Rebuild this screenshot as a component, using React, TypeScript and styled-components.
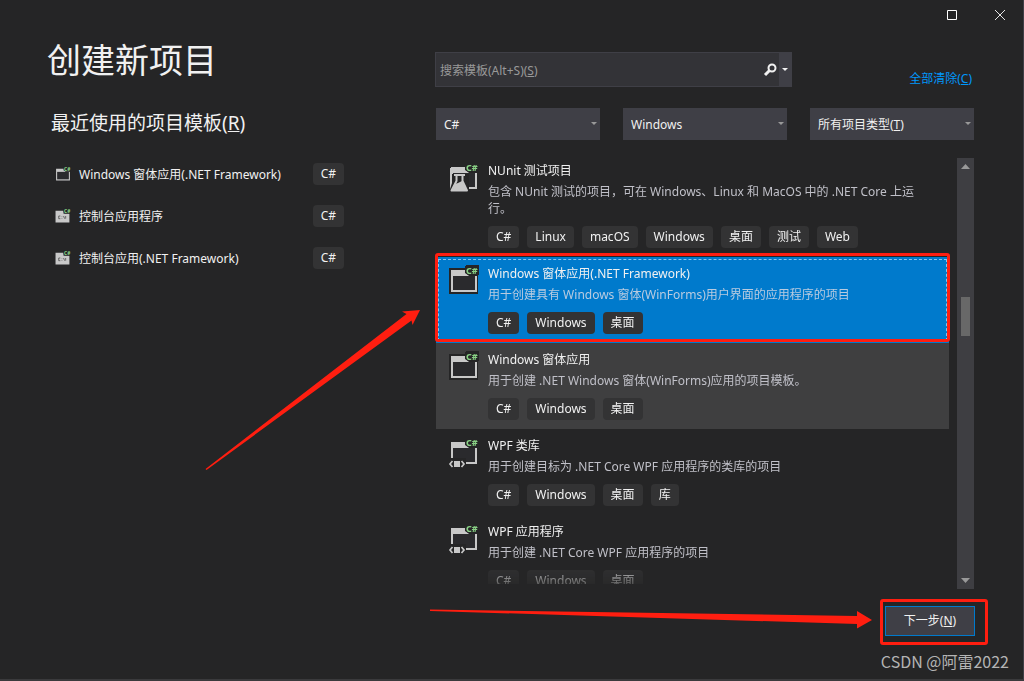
import React from "react";
import styled, { createGlobalStyle, css } from "styled-components";

const GlobalStyle = createGlobalStyle`
  * { box-sizing: border-box; }
  body {
    margin: 0;
    background: #252526;
    color: #f1f1f1;
    font-family: "Noto Sans", "Noto Sans CJK SC", sans-serif;
    font-size: 12px;
  }
  button, input, select { font: inherit; color: inherit; }
  h1, h2, h3, p, ul { margin: 0; padding: 0; font-weight: 400; }
  ul { list-style: none; }
`;

const Window = styled.div`
  position: relative;
  display: flex;
  flex-direction: column;
  height: 100vh;
  min-height: 480px;
  background: #252526;
  border-right: 1px solid #3f3f46;
  border-bottom: 2px solid #3a3a3c;
`;

const TitleBar = styled.header`
  display: flex;
  justify-content: flex-end;
  height: 30px;
  margin-right: -1px;
`;

const CaptionButton = styled.button`
  display: grid;
  place-items: center;
  width: 48px;
  padding: 0;
  border: 0;
  background: none;
`;

const Main = styled.main`
  flex: 1;
  min-height: 0;
  display: grid;
  grid-template-columns: minmax(0, 388fr) minmax(0, 539fr);
  padding: 0 49px 0 47px;
`;

const RecentPane = styled.section`
  padding-top: 6px;
`;

const Title = styled.h1`
  font-size: 34px;
  line-height: 48px;
  white-space: nowrap;
`;

const Subtitle = styled.h2`
  margin-top: 25px;
  padding-left: 4px;
  font-size: 19px;
  line-height: 28px;
  white-space: nowrap;
`;

const RecentList = styled.ul`
  max-width: 297px;
  margin-top: 16px;
  padding-left: 8px;
`;

const RecentItem = styled.li`
  display: flex;
  align-items: center;
  gap: 8px;
  height: 42px;
`;

const RecentName = styled.span`
  flex: 1;
  white-space: nowrap;
`;

const Tag = styled.span`
  display: inline-block;
  padding: 0 8px;
  border-radius: 4px;
  background: #333334;
  line-height: 22px;
  white-space: nowrap;
`;

const TemplatePane = styled.section`
  display: flex;
  flex-direction: column;
  min-height: 0;
  padding-top: 22px;
`;

const SearchRow = styled.div`
  display: flex;
  align-items: flex-end;
  justify-content: space-between;
  padding-right: 2px;
`;

const SearchBox = styled.div`
  display: grid;
  grid-template-columns: 1fr 23px 12px;
  width: 357px;
  height: 35px;
  border: 1px solid #3f3f46;
  background: #333337;
`;

const SearchLabel = styled.label`
  grid-area: 1 / 1;
  align-self: center;
  padding-left: 4px;
  color: #999999;
`;

const SearchInput = styled.input`
  grid-area: 1 / 1;
  min-width: 0;
  padding: 0 4px;
  border: 0;
  outline: 0;
  background: transparent;
`;

const SearchButton = styled.button<{ $filled?: boolean }>`
  display: grid;
  align-items: center;
  justify-items: ${(p) => (p.$filled ? "center" : "end")};
  padding: 0;
  border: 0;
  background: ${(p) => (p.$filled ? "#3f3f46" : "none")};
`;

const ClearLink = styled.a`
  color: #0097fb;
  line-height: 16px;
  text-decoration: none;
`;

const Filters = styled.div`
  display: grid;
  grid-template-columns: repeat(3, minmax(0, 1fr));
  gap: 23px;
  margin-top: 21px;
  padding-left: 1px;
`;

const Filter = styled.div`
  display: grid;
  grid-template-columns: 1fr 12px;
  align-items: center;
  height: 32px;
  background: #3f3f46;
`;

const FilterSelect = styled.select`
  grid-area: 1 / 1 / 2 / 3;
  height: 32px;
  padding: 0 8px;
  border: 0;
  outline: 0;
  appearance: none;
  background: transparent;
`;

const FilterLabel = styled.label`
  grid-area: 1 / 1;
  padding-left: 8px;
  pointer-events: none;
`;

const FilterArrow = styled.svg`
  grid-area: 1 / 2;
  justify-self: center;
  pointer-events: none;
`;

const ListArea = styled.div`
  flex: 1;
  min-height: 0;
  display: flex;
  gap: 8px;
  margin-top: 14px;
  padding-left: 1px;
`;

const TemplateList = styled.ul`
  flex: 1;
  min-width: 0;
  margin: 0 -1px 5px;
  padding: 0 1px;
  overflow: hidden;
  mask-image: linear-gradient(to top, rgba(0, 0, 0, 0.3), #000 24px);
`;

type RowState = "selected" | "hover" | undefined;

const TemplateRow = styled.li<{ $state: RowState }>`
  position: relative;
  display: flex;
  gap: 9px;
  padding: 7px 13px 9px;
  ${(p) =>
    p.$state === "selected" &&
    css`
      background: #007acc;
      outline: 1px dashed #8cc4ec;
      outline-offset: -3px;
    `}
  ${(p) => p.$state === "hover" && css`background: #3f3f40;`}
`;

const IconSlot = styled.div`
  flex: none;
  padding-top: 1px;
`;

const Glyph = styled.svg`
  overflow: visible;
`;

const TemplateText = styled.div`
  min-width: 0;
`;

const TemplateName = styled.h3`
  font-size: 12px;
  line-height: 20px;
`;

const TemplateInfo = styled.p<{ $selected: boolean }>`
  margin-top: 2px;
  line-height: 17px;
  color: ${(p) => (p.$selected ? "#b9cbe0" : "#c0c0c8")};
`;

const Tags = styled.div`
  display: flex;
  gap: 8px;
  margin-top: 9px;
`;

const ScrollBar = styled.div`
  display: flex;
  flex-direction: column;
  align-items: center;
  justify-content: space-between;
  width: 17px;
  margin-top: 4px;
  padding: 5px 0;
  background: #3e3e42;
`;

const Track = styled.div`
  flex: 1;
  display: grid;
  grid-template-rows: 126fr 39px 239fr;
  width: 9px;
`;

const Thumb = styled.div`
  grid-row: 2;
  background: #686868;
`;

const Footer = styled.footer`
  display: flex;
  flex-direction: column;
  align-items: flex-end;
  padding: 17px 14px 8px;
`;

const NextSlot = styled.div`
  position: relative;
  margin-right: 34px;
`;

const NextButton = styled.button`
  width: 90px;
  height: 30px;
  padding: 0 0 2px;
  border: 1px solid #007acc;
  background: #3f3f46;
`;

const Credit = styled.p`
  margin-top: 15px;
  color: #b4b4b4;
  font-family: "Noto Sans CJK SC", sans-serif;
  font-size: 16px;
  line-height: 20px;
`;

const Highlight = styled.span<{ $inset: string }>`
  position: absolute;
  inset: ${(p) => p.$inset};
  z-index: 1;
  border: 3px solid #ff1e10;
  border-radius: 3px;
  pointer-events: none;
`;

const Arrows = styled.svg`
  position: absolute;
  top: 0;
  left: 0;
  pointer-events: none;
`;

type IconKind = "form" | "test" | "wpf" | "console";

function ProjectIcon({ kind, size }: { kind: IconKind; size: number }) {
  return (
    <Glyph width={size} height={size} viewBox="0 0 30 30" aria-hidden="true">
      {kind === "form" && <path d="M0 3h17V0h13v10h-1v19H0z" fill="#252526" />}
      {kind === "console" ? (
        <>
          <path d="M1 5h15v6h11v16H1z" fill="#c8c8c8" />
          <path d="M10 15H7v5h3M13 16v1M13 19v1M16 15l2 5M20 15v5" stroke="#444" strokeWidth="1.4" fill="none" />
        </>
      ) : (
        <>
          <path d="M2 5h15v3l3 3h8v16H2z" fill="#c8c8c8" />
          <path d="M4 11h22v14H4z" fill="#2a2a2d" />
        </>
      )}
      {kind === "test" && (
        <>
          <path d="M0 12h20v18H0z" fill="#252526" />
          <path d="M1 6h16v5H3v10l-2 6z" fill="#c8c8c8" />
          <path d="M5 13h11M7.500 13v6L2.500 28.500h15.500L13.500 19v-6" stroke="#c8c8c8" strokeWidth="2" fill="none" strokeLinejoin="round" />
          <path d="M6 22l3-1 4-2 5 10H3z" fill="#c8c8c8" />
        </>
      )}
      {kind === "wpf" && (
        <>
          <path d="M0 21h17v9H0z" fill="#252526" />
          <path d="M5 24h6v6H5z" fill="#c8c8c8" />
          <path d="M3.500 24L1 27l2.500 3M12.500 24l2.500 3-2.500 3" stroke="#c8c8c8" strokeWidth="1.700" fill="none" />
        </>
      )}
      <path d="M16 1h14v9H19l-3-2z" fill="#252526" />
      <text x="17" y="9" fontSize="9" fontWeight="800" fill="#89d185">C#</text>
    </Glyph>
  );
}

const recent: { icon: IconKind; name: string }[] = [
  { icon: "form", name: "Windows 窗体应用(.NET Framework)" },
  { icon: "console", name: "控制台应用程序" },
  { icon: "console", name: "控制台应用(.NET Framework)" },
];

const templates: { icon: IconKind; name: string; info: string; tags: string[]; state?: RowState }[] = [
  {
    icon: "test",
    name: "NUnit 测试项目",
    info: "包含 NUnit 测试的项目，可在 Windows、Linux 和 MacOS 中的 .NET Core 上运行。",
    tags: ["C#", "Linux", "macOS", "Windows", "桌面", "测试", "Web"],
  },
  {
    icon: "form",
    name: "Windows 窗体应用(.NET Framework)",
    info: "用于创建具有 Windows 窗体(WinForms)用户界面的应用程序的项目",
    tags: ["C#", "Windows", "桌面"],
    state: "selected",
  },
  {
    icon: "form",
    name: "Windows 窗体应用",
    info: "用于创建 .NET Windows 窗体(WinForms)应用的项目模板。",
    tags: ["C#", "Windows", "桌面"],
    state: "hover",
  },
  {
    icon: "wpf",
    name: "WPF 类库",
    info: "用于创建目标为 .NET Core WPF 应用程序的类库的项目",
    tags: ["C#", "Windows", "桌面", "库"],
  },
  {
    icon: "wpf",
    name: "WPF 应用程序",
    info: "用于创建 .NET Core WPF 应用程序的项目",
    tags: ["C#", "Windows", "桌面"],
  },
];

function DropArrow() {
  return (
    <FilterArrow width="6" height="4" viewBox="0 0 6 4" aria-hidden="true">
      <path d="M0 0h6L3 3z" fill="#999" />
    </FilterArrow>
  );
}

export default function App() {
  return (
    <Window>
      <GlobalStyle />
      <TitleBar>
        <CaptionButton aria-label="最大化">
          <svg width="10" height="10"><path d="M.5.5h9v9h-9z" stroke="#fff" fill="none" /></svg>
        </CaptionButton>
        <CaptionButton aria-label="关闭">
          <svg width="10" height="10"><path d="M0 0l10 10M10 0L0 10" stroke="#e6e6e6" fill="none" /></svg>
        </CaptionButton>
      </TitleBar>

      <Main>
        <RecentPane>
          <Title>创建新项目</Title>
          <Subtitle>最近使用的项目模板(<u>R</u>)</Subtitle>
          <RecentList>
            {recent.map((r) => (
              <RecentItem key={r.name}>
                <ProjectIcon kind={r.icon} size={16} />
                <RecentName>{r.name}</RecentName>
                <Tag>C#</Tag>
              </RecentItem>
            ))}
          </RecentList>
        </RecentPane>

        <TemplatePane>
          <SearchRow>
            <SearchBox>
              <SearchLabel htmlFor="search">搜索模板(Alt+S)(<u>S</u>)</SearchLabel>
              <SearchInput id="search" type="text" accessKey="s" />
              <SearchButton aria-label="搜索">
                <svg width="16" height="14" viewBox="0 0 16 14">
                  <circle cx="9" cy="5" r="3.500" stroke="#f1f1f1" strokeWidth="2" fill="none" />
                  <path d="M6.500 7.500L2 12" stroke="#f1f1f1" strokeWidth="3" />
                </svg>
              </SearchButton>
              <SearchButton $filled aria-label="搜索选项">
                <svg width="6" height="4"><path d="M0 0h6L3 3z" fill="#f1f1f1" /></svg>
              </SearchButton>
            </SearchBox>
            <ClearLink href="#clear">全部清除(<u>C</u>)</ClearLink>
          </SearchRow>

          <Filters>
            <Filter>
              <FilterSelect aria-label="语言"><option>C#</option></FilterSelect>
              <DropArrow />
            </Filter>
            <Filter>
              <FilterSelect aria-label="平台"><option>Windows</option></FilterSelect>
              <DropArrow />
            </Filter>
            <Filter>
              <FilterSelect id="type"><option value="" /></FilterSelect>
              <FilterLabel htmlFor="type">所有项目类型(<u>T</u>)</FilterLabel>
              <DropArrow />
            </Filter>
          </Filters>

          <ListArea>
            <TemplateList>
              {templates.map((t) => (
                <TemplateRow key={t.name} $state={t.state}>
                  <IconSlot><ProjectIcon kind={t.icon} size={30} /></IconSlot>
                  <TemplateText>
                    <TemplateName>{t.name}</TemplateName>
                    <TemplateInfo $selected={t.state === "selected"}>{t.info}</TemplateInfo>
                    <Tags>{t.tags.map((tag) => <Tag key={tag}>{tag}</Tag>)}</Tags>
                  </TemplateText>
                  {t.state === "selected" && <Highlight $inset="-4px -1px 1px" />}
                </TemplateRow>
              ))}
            </TemplateList>
            <ScrollBar>
              <svg width="9" height="6"><path d="M0 6h9L4.500 1z" fill="#999" /></svg>
              <Track><Thumb /></Track>
              <svg width="9" height="6"><path d="M0 0h9L4.500 5z" fill="#999" /></svg>
            </ScrollBar>
          </ListArea>
        </TemplatePane>
      </Main>

      <Footer>
        <NextSlot>
          <NextButton>下一步(<u>N</u>)</NextButton>
          <Highlight $inset="-7px -13px -9px -5px" />
        </NextSlot>
        <Credit>CSDN @阿雷2022</Credit>
      </Footer>

      <Arrows width="880" height="640" viewBox="0 0 880 640" aria-hidden="true">
        <path d="M205.500 469L406.500 314l-4.500-2.500L420 310l-7.500 15-1-4.500L206.500 470z" fill="#ff1e10" />
        <path d="M430 609.500L857 616v-5l15 9-15 8.500V624L430 611z" fill="#ff1e10" />
      </Arrows>
    </Window>
  );
}
